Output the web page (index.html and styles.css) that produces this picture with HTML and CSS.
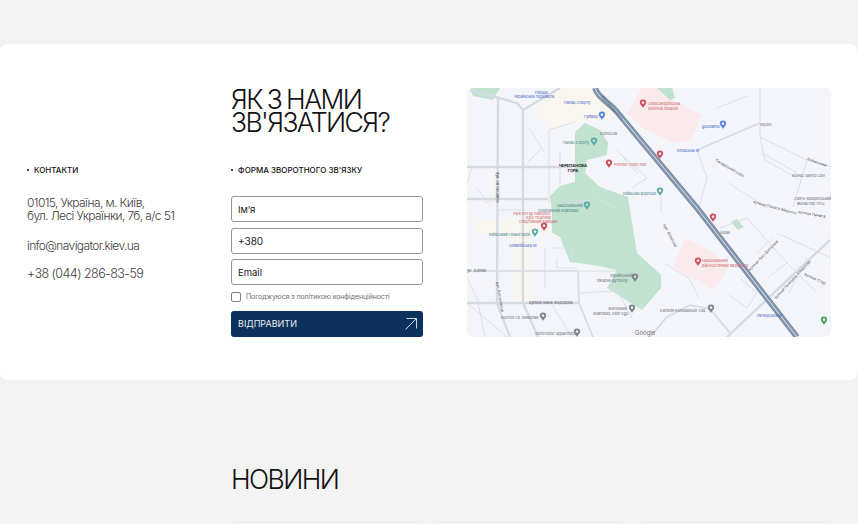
FILE: index.html
```html
<!DOCTYPE html>
<html lang="uk">
<head>
    <meta charset="UTF-8">
    <meta name="viewport" content="width=device-width, initial-scale=1.0">
    <title>Контакти</title>
    <link rel="stylesheet" href="styles.css">
</head>
<body>
    <section class="contacts">
        <h2 class="contacts-title">ЯК З НАМИ<br>ЗВ'ЯЗАТИСЯ?</h2>

        <div class="contacts-info">
            <p class="label">КОНТАКТИ</p>
            <p class="info-line info-address">01015, Україна, м. Київ,<br>бул. Лесі Українки, 7б, а/с 51</p>
            <p class="info-line">info@navigator.kiev.ua</p>
            <p class="info-line info-phone">+38 (044) 286-83-59</p>
        </div>

        <form class="contacts-form">
            <p class="label">ФОРМА ЗВОРОТНОГО ЗВ'ЯЗКУ</p>
            <input type="text" class="input-field" placeholder="Ім’я">
            <input type="text" class="input-field input-phone" placeholder="+380">
            <input type="text" class="input-field" placeholder="Email">
            <label class="agree">
                <span class="agree-box"></span>
                <span>Погоджуюся з політикою конфіденційності</span>
            </label>
            <button class="send-button" type="button">
                <span>ВІДПРАВИТИ</span>
                <svg class="send-arrow" viewBox="0 0 12 12" width="12" height="12">
                    <path d="M0.5 11.5 L11.5 0.5 M1.5 0.5 H11.5 V10.5"/>
                </svg>
            </button>
        </form>

        <div class="map">
            <svg viewBox="0 0 364 249" width="364" height="249">
                <defs>
                    <path id="pin" fill-rule="evenodd" d="M0,0 C-0.8,-2 -3.2,-3 -3.2,-5.4 A3.2,3.2 0 1 1 3.2,-5.4 C3.2,-3 0.8,-2 0,0Z M0,-6.7 a1.3,1.3 0 1 0 0.01,0Z"/>
                </defs>
                <rect class="m-base" width="364" height="249"/>

                <!-- areas -->
                <polygon class="m-sand" points="68,22 93,0 126,0 150,29 108,35 83,42"/>
                <polygon class="m-sand" points="6,132 83,130 83,145 63,146 63,212 46,212 46,146 6,146"/>
                <polygon class="m-park" points="3,0 33,0 26,12 6,8"/>
                <polygon class="m-park" points="108,44 118,35 133,42 141,55 140,67 120,72 118,85 133,99 161,109 163,122 170,165 194,187 194,200 175,222 140,200 150,182 126,177 103,174 93,149 85,145 85,122 83,108 93,98 108,94"/>
                <polygon class="m-park" points="264,134 270,131 277,139 271,142"/>
                <polygon class="m-pink" points="175,0 190,0 205,12 235,27 223,52 208,55 178,42 160,25"/>
                <polygon class="m-pink" points="218,150 246,164 262,180 246,202 206,179"/>
                <polygon class="m-park" points="190,0 205,0 208,10 203,12"/>

                <!-- roads, thin -->
                <g class="m-thin">
                    <path d="M82,42 L82,115 M82,42 L108,34 M93,98 L93,62 M100,115 L125,112"/>
                    <path d="M293,-1 L293,49 L340,72 L365,79 M340,72 L326,119 M293,49 L298,72 L330,90"/>
                    <path d="M230,62 L240,90 L232,118 M262,95 L300,120 M295,65 L330,85 M250,20 L280,8"/>
                    <path d="M156,68 L180,90 L165,100 M170,85 L150,62 M128,110 L150,120 M194,108 L194,125"/>
                    <path d="M78,160 L78,200 M85,160 L105,160 L105,175 M90,170 L90,180 L110,180"/>
                    <path d="M112,183 L150,183 M112,205 L150,203 L165,230 M85,217 L105,249"/>
                    <path d="M232,210 L222,190 L198,176 M253,140 L280,130 L320,175 L350,205 M290,165 L305,150 M320,175 L300,190"/>
                    <path d="M262,207 L280,220 L290,205 L273,190 M310,145 L364,170 M340,170 L322,205"/>
                    <path d="M0,190 L10,210 L18,249 M0,215 L40,249 M5,80 L0,95 M10,100 L20,115 L30,110"/>
                    <path d="M60,75 L75,60 M62,40 L78,65 M56,122 L30,122"/>
                </g>

                <!-- roads, main -->
                <g class="m-road">
                    <path d="M31,8 L30,215 L43,249"/>
                    <path d="M56,22 L56,215 L71,249"/>
                    <path d="M3,2 L50,15 L56,22 L93,0"/>
                    <path d="M0,79 L105,79 M0,111 L81,111 M0,215 L112,215"/>
                    <path d="M260,249 L363,152"/>
                </g>
                <g class="m-mid">
                    <path d="M0,183 L111,183 L112,215 L126,249"/>
                    <path d="M230,62 L293,35"/>
                    <path d="M183,249 L200,229 L223,217 L243,221 L263,245"/>
                </g>

                <!-- highway -->
                <path class="m-way" d="M128,0 C131,10 142,14 150,24 L230,120 L330,249"/>
                <path class="m-way-line" d="M128,0 C131,10 142,14 150,24 L230,120 L330,249"/>

                <!-- dark road names -->
                <g class="m-name">
                    <text x="134" y="9" transform="rotate(48 134 9)">Кропивницького</text>
                    <text x="29" y="84" transform="rotate(90 29 84)">вул. Антоновича</text>
                    <text x="29" y="194" transform="rotate(80 29 194)">вул. Антоновича</text>
                    <text x="62" y="215.5">вулиця Івана Федорова</text>
                    <text x="0" y="184">ул. Дзюби</text>
                    <text x="340" y="72" transform="rotate(20 340 72)">Кловський</text>
                    <text x="309" y="211" transform="rotate(-47 309 211)">вулиця Генерала Алмазова</text>
                    <text x="337" y="187" transform="rotate(25 337 187)">вулиця Стар</text>
                    <text x="283" y="183" transform="rotate(-46 283 183)">вулиця Лесі Дніпрова</text>
                    <text x="286" y="115" transform="rotate(15 286 115)">вулиця Панаса Мирного</text>
                    <text x="331" y="125" transform="rotate(10 331 125)">вулиця Панаса</text>
                    <text x="248" y="73" transform="rotate(30 248 73)">Печерський узвіз</text>
                    <text x="196" y="137" transform="rotate(62 196 137)">вул. Філатова</text>
                </g>

                <text class="m-area" x="106" y="79" text-anchor="middle">ЧЕРЕПАНОВА</text>
                <text class="m-area" x="106" y="84" text-anchor="middle">ГОРА</text>

                <!-- blue stops -->
                <g class="m-blue">
                    <text x="68" y="6">Площа</text>
                    <text x="47" y="10">Українська Перемога</text>
                    <text x="97" y="16">Палац Спорту</text>
                    <text x="117" y="30">Гулівер</text>
                    <text x="235" y="40">goodwine</text>
                    <text x="210" y="64">Кловська М</text>
                    <text x="42" y="159">Олімпійська М</text>
                    <text x="290" y="229">Печерська М</text>
                </g>

                <!-- teal labels -->
                <g class="m-teal">
                    <text x="96" y="56">Палац Спорту</text>
                    <text x="156" y="107">Київська фортеця</text>
                    <text x="90" y="119">Національний</text>
                    <text x="71" y="123.5">спортивний комплекс</text>
                    <text x="22" y="148">Київський Планетарій</text>
                </g>

                <!-- gray labels -->
                <g class="m-gray">
                    <text x="133" y="47">Кріпосна</text>
                    <text x="143" y="189">Український</text>
                    <text x="130" y="193.5">лікарня футболу</text>
                    <text x="141" y="222">Житловий</text>
                    <text x="126" y="226.5">комплекс Alter Ego</text>
                    <text x="34" y="231">Костел Св. Миколая</text>
                    <text x="68" y="247">Zentrmeter appartment</text>
                    <text x="193" y="224">Євгенія Коновальця 34а</text>
                    <text x="325" y="89">Бізнес-центр Сен</text>
                    <text x="327" y="112">Свято-Введенський</text>
                    <text x="330" y="116.5">монастир УПЦ</text>
                    <text x="293" y="38">Арсен</text>
                    <text x="253" y="146">Ашан</text>
                </g>

                <!-- red labels -->
                <g class="m-red">
                    <text x="181" y="17">Олександрівська</text>
                    <text x="181" y="21.5">клінічна лікарня</text>
                    <text x="147" y="78">Premier Hotel Rus</text>
                    <text x="46" y="127">Park Inn by Radisson</text>
                    <text x="59" y="131">Kyiv Troyitska</text>
                    <text x="52" y="135">Спортивний Майдан</text>
                    <text x="235" y="174">Національний</text>
                    <text x="235" y="179">діагностичний медцентр</text>
                </g>

                <!-- pins -->
                <g class="m-pin-blue">
                    <use href="#pin" x="135" y="32"/>
                    <use href="#pin" x="256" y="41"/>
                </g>
                <g class="m-pin-teal">
                    <use href="#pin" x="127" y="58"/>
                    <use href="#pin" x="193" y="108"/>
                    <use href="#pin" x="120" y="122"/>
                    <use href="#pin" x="68" y="149"/>
                </g>
                <g class="m-pin-gray">
                    <use href="#pin" x="168" y="194"/>
                    <use href="#pin" x="165" y="225"/>
                    <use href="#pin" x="76" y="233"/>
                    <use href="#pin" x="110" y="249"/>
                    <use href="#pin" x="244" y="225"/>
                </g>
                <g class="m-pin-red">
                    <use href="#pin" x="142" y="80"/>
                    <use href="#pin" x="77" y="143"/>
                    <use href="#pin" x="193" y="71"/>
                    <use href="#pin" x="246" y="134"/>
                    <use href="#pin" x="231" y="178"/>
                    <use href="#pin" x="176" y="20"/>
                </g>
                <use class="m-pin-green" href="#pin" x="357" y="237"/>
                <text class="m-google" x="168" y="247">Google</text>
            </svg>
        </div>
    </section>

    <section class="news">
        <h2 class="news-title">НОВИНИ</h2>
        <div class="news-list">
            <div class="news-card"></div>
            <div class="news-card"></div>
            <div class="news-card"></div>
        </div>
    </section>
</body>
</html>
```

FILE: styles.css
```css
* {
    margin: 0;
    padding: 0;
    box-sizing: border-box;
}

html, body {
    height: 524px;
    overflow: hidden;
}

body {
    background-color: rgb(243, 243, 243);
    font-family: Inter, "Liberation Sans", sans-serif;
    color: rgb(17, 17, 17);
}

.contacts {
    display: grid;
    grid-template-columns: 160px 192px 364px;
    grid-template-rows: 77px auto;
    column-gap: 44px;
    height: 336px;
    margin-top: 44px;
    padding: 44px 27px 0;
    background-color: white;
    border-radius: 8px;
}

.contacts-title {
    grid-column: 2;
    grid-row: 1;
    font-size: 26.5px;
    font-weight: 300;
    line-height: 23px;
    letter-spacing: -1.6px;
    word-spacing: -1px;
}

.label {
    position: relative;
    padding-left: 7px;
    font-size: 8px;
    font-weight: 500;
    line-height: 11px;
    margin-bottom: 20px;
    white-space: nowrap;
}

.label::before {
    content: "";
    position: absolute;
    left: 0;
    top: 4px;
    width: 2px;
    height: 2px;
    border-radius: 50%;
    background-color: rgb(17, 17, 17);
}

.contacts-info {
    grid-column: 1;
    grid-row: 2;
}

.contacts-info .label {
    margin-bottom: 21px;
}

.info-line {
    font-size: 12px;
    font-weight: 300;
    line-height: 13px;
    letter-spacing: -0.62px;
    color: rgb(60, 60, 60);
    margin-bottom: 15px;
    white-space: nowrap;
}

.info-address {
    line-height: 12.5px;
    margin-bottom: 17px;
}

.info-phone {
    font-size: 12.5px;
    letter-spacing: -0.55px;
}

.contacts-form {
    grid-column: 2;
    grid-row: 2;
    display: flex;
    flex-direction: column;
}

.input-field {
    height: 26px;
    margin-bottom: 5.5px;
    padding: 0 6px;
    font-family: inherit;
    font-size: 9.5px;
    color: rgb(34, 34, 34);
    border: 1px solid rgb(150, 150, 150);
    border-radius: 3px;
    outline: none;
    background-color: white;
}

.input-field::placeholder {
    color: rgb(34, 34, 34);
    opacity: 1;
}

.input-phone {
    font-size: 10px;
}

.agree {
    display: flex;
    align-items: center;
    gap: 5px;
    margin-top: 1px;
    font-size: 7px;
    letter-spacing: -0.1px;
    color: rgb(110, 110, 110);
}

.agree-box {
    width: 10px;
    height: 10px;
    border: 1px solid rgb(130, 130, 130);
    border-radius: 2px;
}

.send-button {
    display: flex;
    align-items: center;
    justify-content: space-between;
    height: 26px;
    margin-top: 9px;
    padding: 0 6px 0 7px;
    background-color: rgb(11, 50, 93);
    color: rgb(235, 238, 242);
    font-family: inherit;
    font-size: 9px;
    border: none;
    border-radius: 3px;
    cursor: pointer;
}

.send-arrow {
    fill: none;
    stroke: white;
    stroke-width: 0.8;
}

.map {
    grid-column: 3;
    grid-row: 1 / 3;
    height: 249px;
    border-radius: 6px;
    overflow: hidden;
}

.map svg {
    display: block;
}

.m-base { fill: rgb(244, 245, 250); }
.m-sand { fill: rgb(248, 246, 238); }
.m-park { fill: rgb(192, 226, 207); }
.m-pink { fill: rgb(250, 234, 235); }

.m-thin {
    fill: none;
    stroke: rgb(220, 223, 230);
    stroke-width: 1;
}

.m-road {
    fill: none;
    stroke: rgb(214, 219, 227);
    stroke-width: 2.4;
}

.m-mid {
    fill: none;
    stroke: rgb(214, 218, 226);
    stroke-width: 1.6;
}

.m-way {
    fill: none;
    stroke: rgb(130, 148, 172);
    stroke-width: 6;
}

.m-way-line {
    fill: none;
    stroke: rgb(226, 231, 238);
    stroke-width: 1;
}

.map text {
    font-family: Inter, "Liberation Sans", sans-serif;
    font-size: 3.8px;
}

.m-name { fill: rgb(85, 90, 100); }
.map .m-area { fill: rgb(40, 40, 40); font-weight: 700; font-size: 4px; }
.m-blue { fill: rgb(58, 100, 200); }
.m-teal { fill: rgb(70, 130, 130); }
.m-gray { fill: rgb(105, 110, 120); }
.m-red { fill: rgb(205, 95, 105); }
.map .m-google { fill: rgb(110, 110, 110); font-size: 6px; }

.m-pin-blue { fill: rgb(90, 130, 225); }
.m-pin-teal { fill: rgb(95, 170, 170); }
.m-pin-gray { fill: rgb(125, 130, 140); }
.m-pin-red { fill: rgb(205, 80, 95); }
.m-pin-green { fill: rgb(80, 160, 110); }

.news {
    padding: 84px 0 0 231px;
}

.news-title {
    font-size: 26.5px;
    font-weight: 300;
    line-height: 30px;
    letter-spacing: -1.6px;
}

.news-list {
    display: flex;
    gap: 13px;
    margin-top: 28px;
    width: 598px;
}

.news-card {
    flex: 1;
    height: 200px;
    background-color: rgb(245, 245, 245);
    border: 1px solid rgb(232, 232, 232);
    border-radius: 6px;
}
```
